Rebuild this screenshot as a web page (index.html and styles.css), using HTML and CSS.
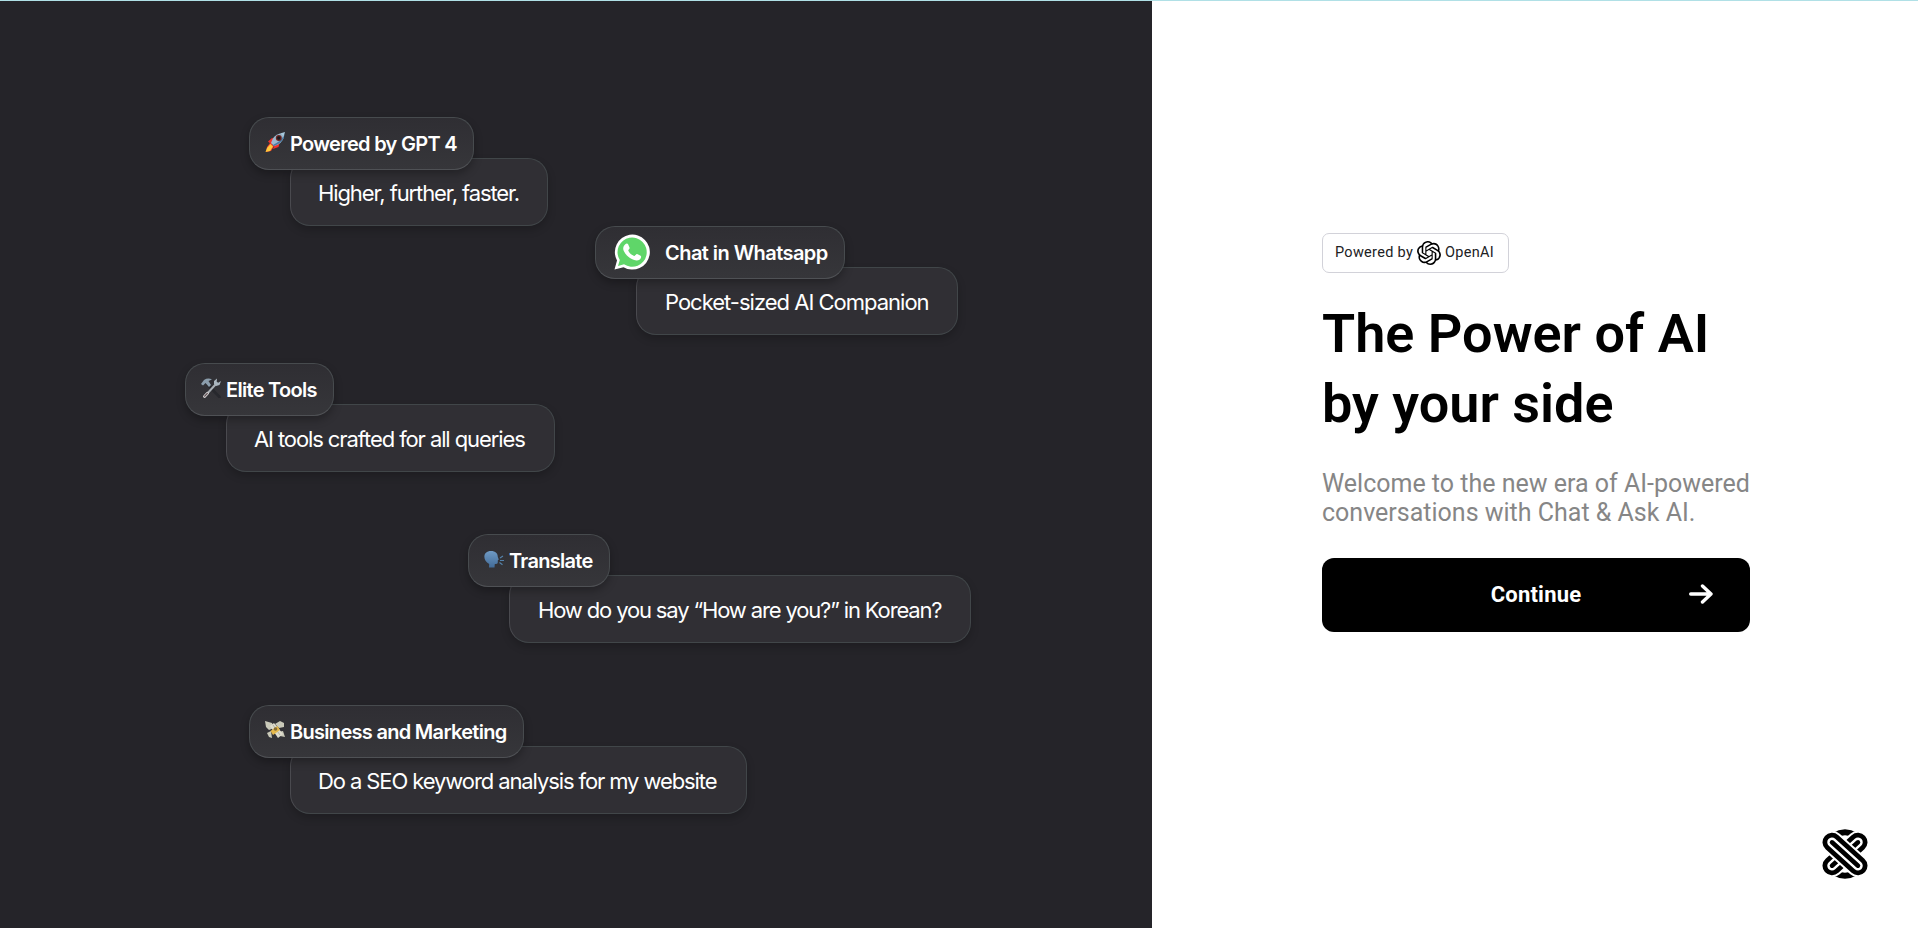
FILE: index.html
```html
<!DOCTYPE html>
<html lang="en">
<head>
<meta charset="utf-8">
<title>Chat &amp; Ask AI</title>
<link rel="stylesheet" href="styles.css">
</head>
<body>
<main class="page">
  <section class="showcase">
    <div class="feature feature-gpt">
      <div class="feature-title">
        <svg class="emoji" viewBox="0 0 20 20"><path d="M3 9.500l4-3.500 4 1-4 6zM8 17l5.500-2 1.500-6-5 3z" fill="#f0322d"/><path d="M5 11l4 3-3 5-5 1 1-5z" fill="#f5402c"/><path d="M5.500 12l2.500 2.500L5 19l-4.500 1 1.500-4z" fill="#ffc93c"/><path d="M6 11Q8 3 15 1.500L19 5Q17 12 9 14z" fill="#9cb9cf"/><path d="M8 13Q16 9 18.500 4L19.500 2Q19.500 10 9 14z" fill="#487ba5"/><path d="M15 1.500L20 0l-1.500 5z" fill="#a9c9dd"/><circle cx="13.800" cy="6" r="3" fill="#6b2622"/><circle cx="13.800" cy="6" r="1.700" fill="#171a20"/></svg>
        <span>Powered by GPT 4</span>
      </div>
      <div class="feature-text"><span>Higher, further, faster.</span></div>
    </div>
    <div class="feature feature-whatsapp">
      <div class="feature-title">
        <svg class="whatsapp" viewBox="0 0 36 36"><path d="M0.500 35.500L3 26.500A17.500 17.500 0 1 1 9.500 33.200z" fill="#fff"/><path d="M4 32L5.800 26A14.600 14.600 0 1 1 10 30.300z" fill="#5fd669"/><path d="M11.300 10.200c1-1 2.400-.8 2.800.1l1.500 3.500c.3 1-1.500 2.200-1.300 2.900 1.300 2.500 3.200 4.200 5.800 5.300.9.300 2-2.400 3-2l3.500 1.700c1.100.5.300 2.900-.8 3.700-2.300 1.700-5.200 1.100-8-.3-3.700-1.900-6.200-4.500-8-8.100-1.200-2.500-.6-4.800 1.500-6.800z" fill="#fff"/></svg>
        <span>Chat in Whatsapp</span>
      </div>
      <div class="feature-text"><span>Pocket-sized AI Companion</span></div>
    </div>
    <div class="feature feature-tools">
      <div class="feature-title">
        <svg class="emoji" viewBox="0 0 20 20"><path d="M6 6l12.500 13" stroke="#27282d" stroke-width="2.600" stroke-linecap="round"/><path d="M4 18L15 6" stroke="#a9afb5" stroke-width="2" stroke-linecap="round"/><path d="M3.500 18.500l3-3.300" stroke="#d2cfd0" stroke-width="2.800" stroke-linecap="round"/><path d="M3.700 18.200l2.600-2.800" stroke="#5c4d51" stroke-width="1.200" stroke-linecap="round"/><path d="M0 6l3-4Q7-.5 11 1.500L7.500 3 10 7 8 9 4.500 5 2 7.500z" fill="#8b9dac"/><path d="M13 6l0-3 3-2.500-.3 3.300 1.500 1L20 3l-1.500 4-3.500 1z" fill="#abb6bf"/></svg>
        <span>Elite Tools</span>
      </div>
      <div class="feature-text"><span>AI tools crafted for all queries</span></div>
    </div>
    <div class="feature feature-translate">
      <div class="feature-title">
        <svg class="emoji" viewBox="0 0 20 20"><defs><linearGradient id="head" x2="0" y2="1"><stop stop-color="#6f9ac4"/><stop offset="1" stop-color="#426b98"/></linearGradient></defs><path d="M7 2c4.500 0 6.800 2.500 6.800 6l1 2.500-1 .7v2.300q0 1.700-3 1.500L10.500 18.500H5L5.200 15C-2 11-1 2 7 2z" fill="url(#head)"/><path d="M16 9l3-2M16 11.500h4M15.500 13.500l3 2.200" stroke="#5482aa" stroke-width="1.200"/></svg>
        <span>Translate</span>
      </div>
      <div class="feature-text"><span>How do you say “How are you?” in Korean?</span></div>
    </div>
    <div class="feature feature-business">
      <div class="feature-title">
        <svg class="emoji" viewBox="0 0 20 20"><path d="M0 1l7 2 2 5-5 2-3-3zM10 4l5-3 4 2v4l-5 1zM6 11l1 7-3-1-2-4zM13 12l5-1 2 6-5-1z" fill="#c9c9b9"/><path d="M5 6l4-3 9 11-5 4z" fill="#dedccd"/><path d="M8 5l7 10" stroke="#a6a797" stroke-width=".8"/><path d="M5.500 11l7-5 2.500 4-7 5z" fill="#e5b94c"/><circle cx="10.500" cy="9" r="1.800" fill="#846c35"/></svg>
        <span>Business and Marketing</span>
      </div>
      <div class="feature-text"><span>Do a SEO keyword analysis for my website</span></div>
    </div>
  </section>
  <section class="welcome">
    <div class="badge">
      <span>Powered by</span>
      <svg class="openai" viewBox="0 0 24 24"><path d="M22.2819 9.8211a5.9847 5.9847 0 0 0-.5157-4.9108 6.0462 6.0462 0 0 0-6.5098-2.9A6.0651 6.0651 0 0 0 4.9807 4.1818a5.9847 5.9847 0 0 0-3.9977 2.9 6.0462 6.0462 0 0 0 .7427 7.0966 5.98 5.98 0 0 0 .511 4.9107 6.051 6.051 0 0 0 6.5146 2.9001A5.9847 5.9847 0 0 0 13.2599 24a6.0557 6.0557 0 0 0 5.7718-4.2058 5.9894 5.9894 0 0 0 3.9977-2.9001 6.0557 6.0557 0 0 0-.7475-7.0729zm-9.022 12.6081a4.4755 4.4755 0 0 1-2.8764-1.0408l.1419-.0804 4.7783-2.7582a.7948.7948 0 0 0 .3927-.6813v-6.7369l2.02 1.1686a.071.071 0 0 1 .038.052v5.5826a4.504 4.504 0 0 1-4.4945 4.4944zm-9.6607-4.1254a4.4708 4.4708 0 0 1-.5346-3.0137l.142.0852 4.783 2.7582a.7712.7712 0 0 0 .7806 0l5.8428-3.3685v2.3324a.0804.0804 0 0 1-.0332.0615L9.74 19.9502a4.4992 4.4992 0 0 1-6.1408-1.6464zM2.3408 7.8956a4.485 4.485 0 0 1 2.3655-1.9728V11.6a.7664.7664 0 0 0 .3879.6765l5.8144 3.3543-2.0201 1.1685a.0757.0757 0 0 1-.071 0l-4.8303-2.7865A4.504 4.504 0 0 1 2.3408 7.872zm16.5963 3.8558L13.1038 8.364 15.1192 7.2a.0757.0757 0 0 1 .071 0l4.8303 2.7913a4.4944 4.4944 0 0 1-.6765 8.1042v-5.6772a.79.79 0 0 0-.407-.667zm2.0107-3.0231l-.142-.0852-4.7735-2.7818a.7759.7759 0 0 0-.7854 0L9.409 9.2297V6.8974a.0662.0662 0 0 1 .0284-.0615l4.8303-2.7866a4.4992 4.4992 0 0 1 6.6802 4.66zM8.3065 12.863l-2.02-1.1638a.0804.0804 0 0 1-.038-.0567V6.0742a4.4992 4.4992 0 0 1 7.3757-3.4537l-.142.0805L8.704 5.459a.7948.7948 0 0 0-.3927.6813zm1.0976-2.3654l2.602-1.4998 2.6069 1.4998v2.9994l-2.5974 1.4997-2.6067-1.4997Z"/></svg>
      <span>OpenAI</span>
    </div>
    <h1 class="headline">The Power of AI<br>by your side</h1>
    <p class="lead">Welcome to the new era of AI-powered<br>conversations with Chat &amp; Ask AI.</p>
    <button class="continue" type="button">
      <span class="continue-label">Continue</span>
      <svg class="arrow" viewBox="0 0 24 20"><path d="M1.700 10H22M13.500 2l8.500 8-8.500 8" /></svg>
    </button>
  </section>
  <svg class="brand" viewBox="0 0 48 50"><g transform="translate(24 25)" fill="none" stroke-linecap="round"><path d="M-11-18.500Q0-25 11-18.500M-11 18.500Q0 25 11 18.500" stroke="#000" stroke-width="6" stroke-linecap="butt"/><g transform="rotate(-42)"><path d="M-17.500 0H17.500" stroke="#fff" stroke-width="23"/><path d="M-17.500 0H17.500" stroke="#000" stroke-width="19"/><path d="M-17.500 0H17.500" stroke="#fff" stroke-width="9.500"/><path d="M-17.500 0H17.500" stroke="#000" stroke-width="4.500"/></g><g transform="rotate(42)"><path d="M-17.500 0H17.500" stroke="#fff" stroke-width="23"/><path d="M-17.500 0H17.500" stroke="#000" stroke-width="19"/><path d="M-17.500 0H17.500" stroke="#fff" stroke-width="9.500"/><path d="M-17.500 0H17.500" stroke="#000" stroke-width="4.500"/></g></g></svg>
</main>
</body>
</html>
```
FILE: styles.css
```css
* { box-sizing: border-box; }
body { margin: 0; background: #fff; font-family: Roboto, "Liberation Sans", sans-serif; }
.page { position: relative; display: flex; height: 928px; border-top: 1px solid #b0e0e6; overflow: hidden; }
.showcase { width: 1152px; padding-top: 116px; background: #252429; color: #fff; font-family: Inter, "Liberation Sans", sans-serif; white-space: nowrap; }
.feature { display: flex; flex-direction: column; height: 109px; }
.feature-title { position: relative; z-index: 1; display: flex; align-items: center; height: 53px; padding-left: 15px; border: 1px solid #474b4e; border-bottom-color: #4f5155; border-radius: 20px; background: linear-gradient(#2f2e33, #36363a); box-shadow: 0 4px 9px rgba(0, 0, 0, .28); font-size: 20px; font-weight: 600; letter-spacing: -.7px; }
.feature-text { display: flex; align-items: center; height: 68px; margin: -12px 0 0 41px; padding: 1px 0 0 27px; border: 1px solid #414649; border-left-color: #4a4a4f; border-radius: 20px; background: #302f34; box-shadow: 0 4px 9px rgba(0, 0, 0, .2); font-size: 22px; font-weight: 400; letter-spacing: -1.1px; }
.emoji { width: 20px; height: 20px; margin: -3px 5px 0 0; flex: none; }
.whatsapp { width: 36px; height: 36px; margin: -2px 15px 0 3px; flex: none; }
.feature-gpt { width: 299px; margin-left: 249px; }
.feature-gpt .feature-title { width: 225px; }
.feature-whatsapp { width: 363px; margin-left: 595px; }
.feature-whatsapp .feature-title { width: 250px; letter-spacing: -.55px; }
.feature-whatsapp .feature-text { padding-left: 28px; letter-spacing: -1px; }
.feature-tools { width: 370px; margin: 28px 0 0 185px; }
.feature-tools .feature-title { width: 149px; }
.feature-translate { width: 503px; margin: 62px 0 0 468px; }
.feature-translate .feature-title { width: 142px; }
.feature-translate .feature-text { padding-left: 28px; letter-spacing: -1.15px; }
.feature-business { width: 498px; margin: 62px 0 0 249px; }
.feature-business .feature-title { width: 275px; }
.welcome { display: flex; flex-direction: column; align-items: flex-start; width: 428px; margin-left: 170px; padding-top: 232px; }
.badge { display: flex; align-items: center; gap: 4px; width: 187px; height: 40px; padding: 0 0 1px 12px; border: 1px solid #d2d2d9; border-radius: 7px; color: #202123; font-size: 14.500px; letter-spacing: .3px; white-space: nowrap; }
.openai { width: 24px; height: 24px; fill: #000; }
.headline { margin: 26px 0 0; color: #000; font-size: 54px; font-weight: 600; line-height: 70px; white-space: nowrap; }
.lead { margin: 30px 0 0; color: #868686; font-size: 25px; font-weight: 400; line-height: 29px; white-space: nowrap; }
.continue { display: grid; grid-template-columns: 60px 1fr 60px; align-items: center; width: 428px; height: 74px; margin-top: 31px; padding: 0 0 2px; border: 0; border-radius: 12px; background: #000; color: #fff; font: 700 22px Roboto, sans-serif; letter-spacing: .2px; }
.continue-label { grid-column: 2; }
.arrow { width: 24px; height: 20px; margin-left: -1px; fill: none; stroke: #fff; stroke-width: 3.400; stroke-linecap: round; stroke-linejoin: round; }
.brand { position: absolute; left: 1821px; top: 828px; width: 48px; height: 50px; }
```
